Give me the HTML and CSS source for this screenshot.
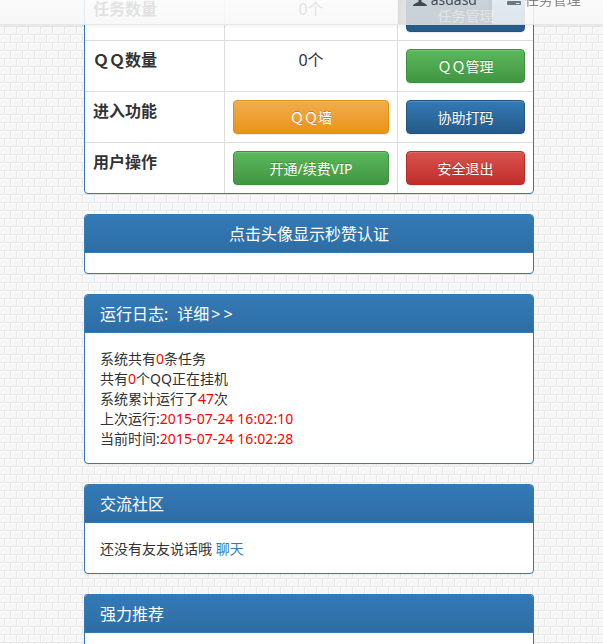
FILE: index.html
```html
<!DOCTYPE html>
<html lang="zh-CN">
<head>
<meta charset="utf-8">
<title>任务管理</title>
<link rel="stylesheet" href="styles.css">
</head>
<body>
<nav class="navbar">
  <ul class="nav">
    <li class="active"><a><svg class="icon" viewBox="0 0 14 14"><path d="M7 0C4.900 0 4.200 1.500 4.200 3.500C4.200 5.500 5 7 5.700 7.700V8.500L1 11.200Q0 11.700 0 13H14Q14 11.700 13 11.200L8.300 8.500V7.700C9 7 9.800 5.500 9.800 3.500C9.800 1.500 9.100 0 7 0Z"/></svg> asdasd</a></li>
    <li><a><svg class="icon" viewBox="0 0 14 14"><path fill-rule="evenodd" d="M3 2H11L14 7H0ZM1 8H13Q14 8 14 9V11Q14 12 13 12H1Q0 12 0 11V9Q0 8 1 8ZM9 10V11H12.500V10Z"/></svg> 任务管理</a></li>
  </ul>
</nav>
<main class="container">
  <section class="panel panel-first">
    <table class="table">
      <tr><th>任务数量</th><td>0个</td><td><a class="btn primary">任务管理</a></td></tr>
      <tr><th>ＱＱ数量</th><td>0个</td><td><a class="btn success">ＱＱ管理</a></td></tr>
      <tr><th>进入功能</th><td><a class="btn warning">ＱＱ墙</a></td><td><a class="btn primary">协助打码</a></td></tr>
      <tr><th>用户操作</th><td><a class="btn success">开通/续费VIP</a></td><td><a class="btn danger">安全退出</a></td></tr>
    </table>
  </section>
  <section class="panel">
    <h3 class="heading centered">点击头像显示秒赞认证</h3>
    <div class="spacer"></div>
  </section>
  <section class="panel">
    <h3 class="heading">运行日志:<a class="detail">详细<span class="arrows">&gt;&gt;</span></a></h3>
    <div class="body">
      系统共有<b>0</b>条任务<br>
      共有<b>0</b>个QQ正在挂机<br>
      系统累计运行了<b>47</b>次<br>
      上次运行:<b class="time">2015-07-24 16:02:10</b><br>
      当前时间:<b class="time">2015-07-24 16:02:28</b>
    </div>
  </section>
  <section class="panel">
    <h3 class="heading">交流社区</h3>
    <div class="body">还没有友友说话哦 <a class="link">聊天</a></div>
  </section>
  <section class="panel panel-last">
    <h3 class="heading">强力推荐</h3>
    <div class="rest"></div>
  </section>
</main>
</body>
</html>
```
FILE: styles.css
```css
* { box-sizing: border-box; }
html { height: 100%; overflow: hidden; }
body {
  margin: 0;
  height: 644px;
  overflow: hidden;
  font: 14px/20px "Noto Sans", "Noto Sans CJK SC", sans-serif;
  color: #333;
  background: #f7f7f7 url("data:image/svg+xml,%3Csvg xmlns='http://www.w3.org/2000/svg' width='12' height='16' shape-rendering='crispEdges'%3E%3Crect width='12' height='16' fill='%23f7f7f7'/%3E%3Cpath fill='%23fdfdfd' d='M0 3h12v1H0zM0 11h12v1H0zM11 3h1v7h-1zM5 11h1v5H5zM5 0h1v2H5z'/%3E%3Cpath fill='%23e7e7e7' d='M0 2h12v1H0zM0 10h12v1H0zM10 3h1v7h-1zM4 11h1v5H4zM4 0h1v2H4z'/%3E%3Cpath fill='%23f3f3f3' d='M2 5h2v1H2zM5 6h2v1H5zM7 7h1v1H7zM1 7h2v1H1zM8 13h2v1H8zM10 14h1v1h-1zM7 15h2v1H7zM0 13h1v1H0z'/%3E%3C/svg%3E");
}
.navbar {
  position: fixed;
  top: -26px;
  left: 0;
  right: 0;
  z-index: 2;
  height: 51px;
  opacity: .88;
  background: linear-gradient(#fff, #f8f8f8);
  border-bottom: 1px solid #e4e4e4;
  box-shadow: 0 1px 4px rgba(0, 0, 0, .09);
}
.nav { display: flex; margin: 0; padding: 0 0 0 398px; list-style: none; }
.nav a { display: block; height: 50px; padding: 16px 15px 14px; color: #777; white-space: nowrap; }
.nav .active a {
  width: 94px;
  color: #444;
  background: linear-gradient(#dbdbdb, #e2e2e2);
  box-shadow: inset 0 3px 9px rgba(0, 0, 0, .075);
}
.icon { display: inline-block; width: 14px; height: 14px; vertical-align: -2px; fill: currentColor; }
.container { width: 450px; margin-left: 84px; }
.panel {
  margin-bottom: 20px;
  background: #fff;
  border: 1px solid #337ab7;
  border-radius: 4px;
  box-shadow: 0 1px 2px rgba(0, 0, 0, .05);
  overflow: hidden;
}
.panel-first { margin-top: -12px; }
.panel-last { margin-bottom: 0; border-bottom: 0; border-radius: 4px 4px 0 0; }
.table { width: 448px; border-collapse: separate; border-spacing: 0; table-layout: fixed; }
.table th, .table td {
  height: 51px;
  padding: 8px;
  border-top: 1px solid #ddd;
  border-right: 1px solid #ddd;
  font-size: 16px;
  line-height: 23px;
  vertical-align: top;
  text-align: center;
}
.table th { width: 140px; text-align: left; }
.table td { width: 173px; }
.table td:last-child { width: 135px; border-right: 0; }
.btn {
  display: block;
  height: 34px;
  padding: 6px 0;
  border: 1px solid;
  border-radius: 4px;
  font-size: 14px;
  line-height: 22px;
  color: #fff;
  text-shadow: 0 -1px 0 rgba(0, 0, 0, .2);
  box-shadow: inset 0 1px 0 rgba(255, 255, 255, .15), 0 1px 1px rgba(0, 0, 0, .075);
}
.primary { background: linear-gradient(#337ab7, #265a88); border-color: #245580; }
.success { background: linear-gradient(#5cb85c, #419641); border-color: #3e8f3e; }
.warning { background: linear-gradient(#f0ad4e, #eb9316); border-color: #e38d13; }
.danger { background: linear-gradient(#d9534f, #c12e2a); border-color: #b92c28; }
.heading {
  height: 38px;
  margin: 0;
  padding: 10px 15px;
  border-bottom: 1px solid #337ab7;
  background: linear-gradient(#337ab7, #2e6da4);
  color: #fff;
  font-size: 16px;
  font-weight: 400;
  line-height: 18px;
}
.centered { text-align: center; }
.detail { margin-left: 9px; }
.arrows { letter-spacing: 3px; margin-left: 2px; }
.spacer { height: 20px; }
.body { padding: 16px 15px 14px; }
.body b { font-weight: 400; color: #f00; }
.body .time { letter-spacing: .07px; }
.rest { height: 11px; }
.link { color: #337ab7; }
```
